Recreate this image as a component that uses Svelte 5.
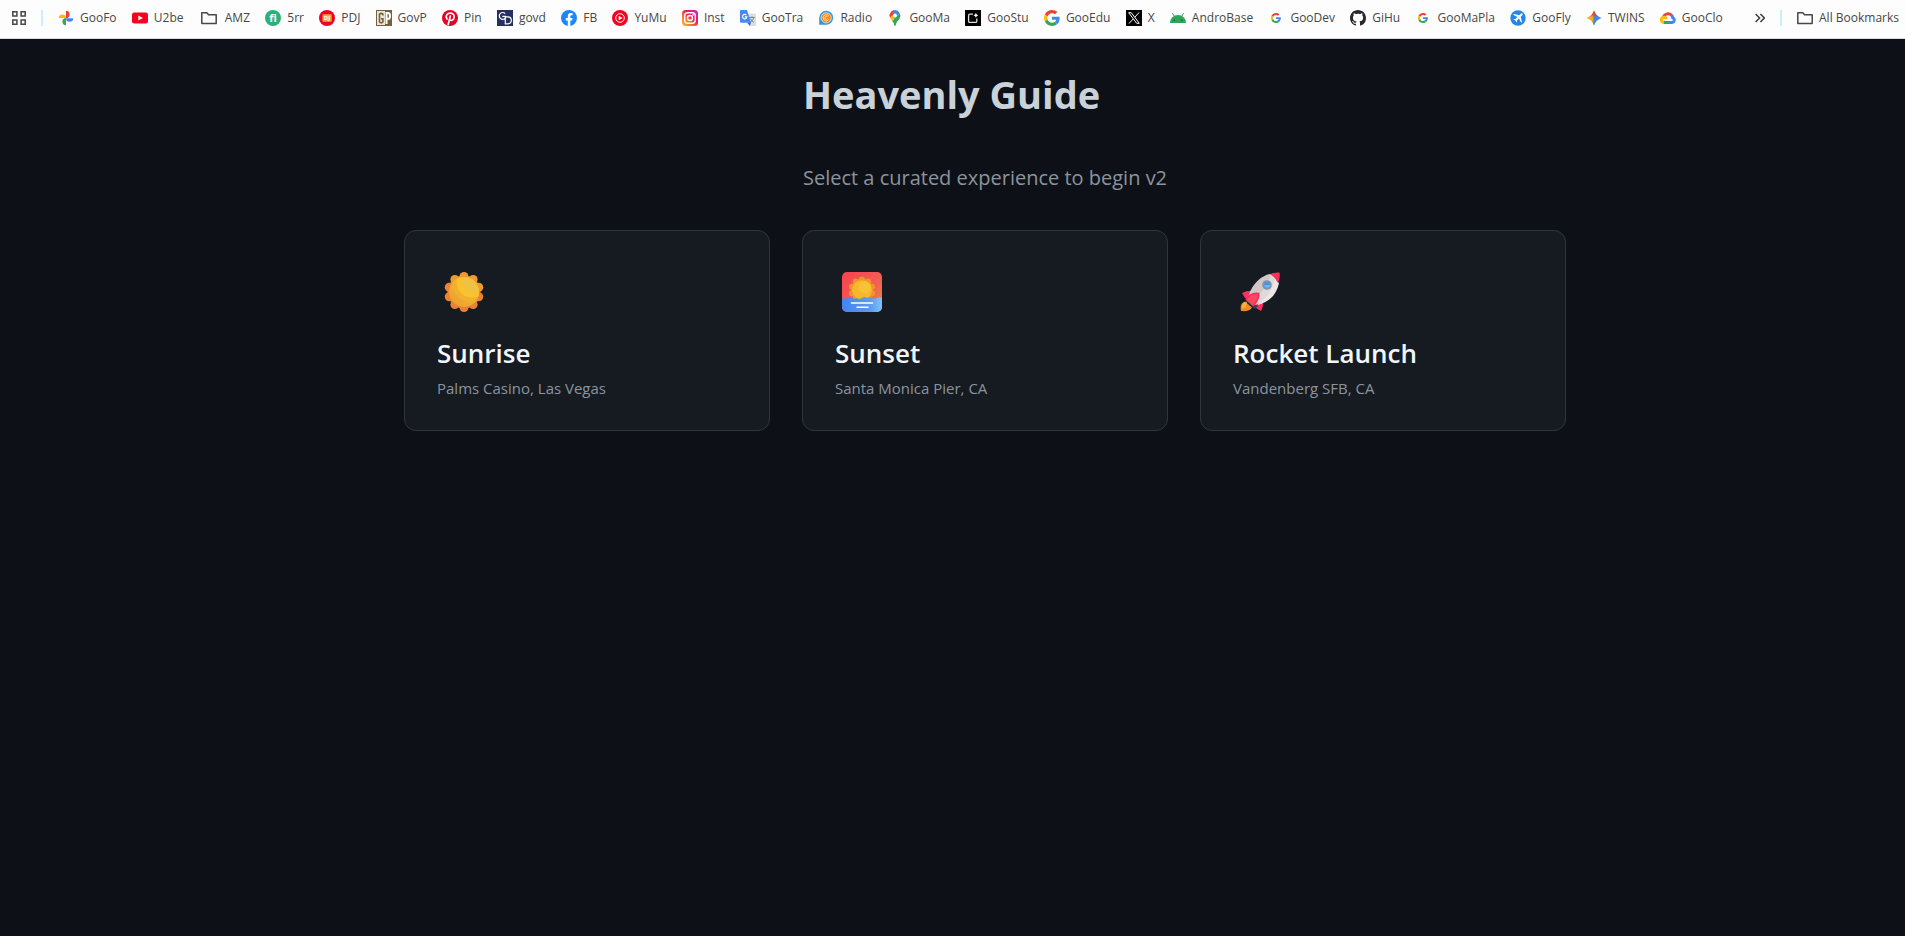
<script>
  const bookmarks = [
    { icon: 'photos', label: 'GooFo' },
    { icon: 'youtube', label: 'U2be' },
    { icon: 'folder', label: 'AMZ' },
    { icon: 'fi', label: '5rr' },
    { icon: 'dj', label: 'PDJ' },
    { icon: 'gp', label: 'GovP' },
    { icon: 'pin', label: 'Pin' },
    { icon: 'gd', label: 'govd' },
    { icon: 'facebook', label: 'FB' },
    { icon: 'ytmusic', label: 'YuMu' },
    { icon: 'instagram', label: 'Inst' },
    { icon: 'translate', label: 'GooTra' },
    { icon: 'radio', label: 'Radio' },
    { icon: 'maps', label: 'GooMa' },
    { icon: 'studio', label: 'GooStu' },
    { icon: 'google', label: 'GooEdu' },
    { icon: 'x', label: 'X' },
    { icon: 'android', label: 'AndroBase' },
    { icon: 'googleSmall', label: 'GooDev' },
    { icon: 'github', label: 'GiHu' },
    { icon: 'googleSmall', label: 'GooMaPla' },
    { icon: 'plane', label: 'GooFly' },
    { icon: 'gemini', label: 'TWINS' },
    { icon: 'cloud', label: 'GooClo' }
  ];

  const experiences = [
    { icon: 'sun', title: 'Sunrise', place: 'Palms Casino, Las Vegas' },
    { icon: 'sunset', title: 'Sunset', place: 'Santa Monica Pier, CA' },
    { icon: 'rocket', title: 'Rocket Launch', place: 'Vandenberg SFB, CA' }
  ];

  const petals = Array.from({ length: 10 }, (_, i) => {
    const a = (i * Math.PI) / 5;
    return { x: 20 + 15.5 * Math.sin(a), y: 20 - 15.5 * Math.cos(a) };
  });
</script>

{#snippet googleMark()}
  <path fill="#ea4335" d="M24 9.5c3.54 0 6.71 1.22 9.21 3.6l6.85-6.85C35.9 2.38 30.47 0 24 0 14.62 0 6.51 5.38 2.56 13.22l7.98 6.19C12.43 13.72 17.74 9.5 24 9.5z" />
  <path fill="#4285f4" d="M46.98 24.55c0-1.57-.15-3.09-.38-4.55H24v9.02h12.94c-.58 2.96-2.26 5.48-4.78 7.18l7.73 6c4.51-4.18 7.09-10.36 7.09-17.65z" />
  <path fill="#fbbc05" d="M10.53 28.59c-.48-1.45-.76-2.99-.76-4.59s.27-3.14.76-4.59l-7.98-6.19C.92 16.46 0 20.12 0 24c0 3.88.92 7.54 2.56 10.78l7.97-6.19z" />
  <path fill="#34a853" d="M24 48c6.48 0 11.93-2.13 15.89-5.81l-7.73-6c-2.15 1.45-4.92 2.3-8.16 2.3-6.26 0-11.57-4.22-13.47-9.91l-7.98 6.19C6.51 42.62 14.62 48 24 48z" />
{/snippet}

{#snippet favicon(name)}
  {#if name === 'google'}
    <svg class="favicon" viewBox="0 0 48 48" aria-hidden="true">{@render googleMark()}</svg>
  {:else if name === 'googleSmall'}
    <svg class="favicon" viewBox="-14 -14 76 76" aria-hidden="true">{@render googleMark()}</svg>
  {:else}
    <svg class="favicon" viewBox="0 0 16 16" aria-hidden="true">
      {#if name === 'photos'}
        <path fill="#ea4335" d="M8 .8a3.6 3.6 0 0 1 3.6 3.6A3.6 3.6 0 0 1 8 8z" />
        <path fill="#4285f4" d="M15.2 8a3.6 3.6 0 0 1-7.2 0z" transform="translate(0 .2)" />
        <path fill="#34a853" d="M8 15.2a3.6 3.6 0 0 1 0-7.2z" />
        <path fill="#fbbc04" d="M.8 8A3.6 3.6 0 0 1 8 8z" />
      {:else if name === 'youtube'}
        <rect x="0" y="2.4" width="16" height="11.2" rx="2.4" fill="#f80020" />
        <path fill="#fff" d="M6.3 5.5 11 8l-4.7 2.5z" />
      {:else if name === 'folder'}
        <path fill="none" stroke="#474747" stroke-width="1.5" stroke-linejoin="round" d="M.8 2.8h5l1.7 2h7.7v8.7H.8z" />
      {:else if name === 'fi'}
        <circle cx="8" cy="8" r="8" fill="#2bb07a" />
        <text x="8" y="12" font-size="11" font-weight="700" text-anchor="middle" fill="#fff">fi</text>
      {:else if name === 'dj'}
        <circle cx="8" cy="8" r="8" fill="#f00028" />
        <rect x="3.500" y="4.300" width="9.200" height="7.400" rx=".6" fill="#f7a823" />
        <text x="8" y="10.200" font-size="6" font-weight="700" text-anchor="middle" fill="#fff">DJ</text>
      {:else if name === 'gp'}
        <rect width="16" height="16" fill="#75623c" />
        <rect x="1" y="1" width="8" height="14" fill="#e9e5da" />
        <path fill="none" stroke="#75623c" stroke-width="1.6" d="M6.9 5.6V4.1Q5.200 2.500 3.500 4.100V12Q5.200 13.600 6.900 12V8.700H5" />
        <path fill="none" stroke="#fff" stroke-width="2" d="M10.500 14V3h1.700q1.800 0 1.800 2.900T12.200 8.800H10.500" />
      {:else if name === 'pin'}
        <circle cx="8" cy="8" r="8" fill="#e60023" />
        <path fill="none" stroke="#fff" stroke-width="1.700" stroke-linecap="round" d="M5 9C2.900 5.600 5.500 3.200 8.300 3.200c2.900 0 4.300 2 3.700 4.500-.5 2.300-2.400 3.400-4.100 2.200M8.300 6 6.200 14.500" />
      {:else if name === 'gd'}
        <rect width="16" height="16" fill="#252f62" />
        <path fill="none" stroke="#fff" stroke-width="1.200" d="M8.200 3.600A3.400 3.400 0 1 0 8.500 7.800V6.300H5.300M8.300 6.800h2.500a3.500 3.500 0 0 1 0 7H8.300z" />
      {:else if name === 'facebook'}
        <circle cx="8" cy="8" r="8" fill="#1d88f5" />
        <path fill="#fff" d="M6.800 16v-5.600h-2V8h2V6.300c0-2.100 1.200-3.200 3-3.200l1.800.2v2h-1c-1 0-1.300.6-1.300 1.200V8h2.200l-.4 2.400H9.300V16z" />
      {:else if name === 'ytmusic'}
        <circle cx="8" cy="8" r="8" fill="#f80020" />
        <circle cx="8" cy="8" r="4.300" fill="none" stroke="#fff" stroke-width="1" />
        <path fill="#fff" d="M6.700 5.700 10.500 8l-3.800 2.300z" />
      {:else if name === 'instagram'}
        <defs>
          <linearGradient id="insta" x1="0" y1="1" x2="1" y2="0">
            <stop offset="0" stop-color="#ffc43a" />
            <stop offset=".35" stop-color="#ff6a28" />
            <stop offset=".6" stop-color="#f0145e" />
            <stop offset="1" stop-color="#c02bd6" />
          </linearGradient>
        </defs>
        <rect width="16" height="16" rx="3.500" fill="url(#insta)" />
        <rect x="2.700" y="2.700" width="10.600" height="10.600" rx="3" fill="none" stroke="#fff" stroke-width="1.400" />
        <circle cx="8" cy="8" r="2.500" fill="none" stroke="#fff" stroke-width="1.400" />
        <circle cx="11.100" cy="4.900" r=".8" fill="#fff" />
      {:else if name === 'translate'}
        <path fill="#dcdfe2" d="M6 3.500h9q1 0 1 1V15q0 1-1 1H10z" />
        <path fill="none" stroke="#71808a" stroke-width=".9" d="M9 7.500h5.800M12 6.200v1.300M13.800 7.700Q12.800 11 10 12.500M10.300 8.500Q11.700 11.500 14 12.500" />
        <path fill="#3a62c8" d="M7 12.500h4L9.800 16z" />
        <path fill="#4688f4" d="M1 0h6l4 12.800H1q-1 0-1-1V1q0-1 1-1z" />
        <path fill="none" stroke="#fff" stroke-width="1.100" d="M6.400 5.200a2.200 2.200 0 1 0 .5 1.700H4.800" />
      {:else if name === 'radio'}
        <path fill="#2e9be0" d="M8.200.8a7 7 0 1 1 0 14H1.200V8a7 7 0 0 1 7-7.200z" />
        <circle cx="8.200" cy="7.800" r="5.100" fill="#f68b1f" stroke="#e8f3fa" stroke-width=".7" />
        <path fill="none" stroke="#ffe3c2" stroke-width=".9" d="M10.800 5.900A3.100 3.100 0 1 0 11 9.300M9.600 7A1.500 1.500 0 1 0 9.600 8.700" />
      {:else if name === 'maps'}
        <path fill="#34a853" d="M13.300 5.600c0 3.400-2.700 4.700-4 7.700C8.900 14.300 8.800 16 8 16s-.9-1.700-1.300-2.700c-.4-1-1-1.800-1.600-2.600z" />
        <path fill="#fbbc04" d="M5.100 10.700C3.900 9.100 2.700 7.700 2.700 5.500L5.500 3.700 10 7z" />
        <path fill="#ea4335" d="M3.900 2A5.300 5.300 0 0 1 7 .2L8 3 3 7.500A5.300 5.300 0 0 1 3.900 2z" />
        <path fill="#4285f4" d="M6.600.2a5.400 5.400 0 0 1 6 2.700L7.500 9 6 5z" />
        <path fill="#34a853" d="M12.600 2.900c1.300 2.800.4 5-1.300 7L5.600 11.300z" />
        <circle cx="8" cy="5.500" r="2" fill="#fff" />
      {:else if name === 'studio'}
        <rect width="16" height="16" fill="#000" />
        <path fill="none" stroke="#ddd" stroke-width="1.300" d="M8 4.200H4.800q-1.200 0-1.200 1.200v5.800q0 1.200 1.200 1.200h5.800q1.200 0 1.200-1.200V8.500" />
        <path fill="#fff" d="M10.900 2.700q.4 2 2.400 2.500-2 .5-2.400 2.500-.4-2-2.400-2.500 2-.5 2.400-2.500z" />
      {:else if name === 'x'}
        <rect width="16" height="16" fill="#000" />
        <path fill="none" stroke="#fff" stroke-width="1" d="M2.700 2.700h2.600l8 10.600h-2.600zM13 2.500 8.800 7.200M7.200 9 3 13.500" />
      {:else if name === 'android'}
        <path fill="none" stroke="#2da65a" stroke-width="1" stroke-linecap="round" d="m2.600 3.500 2 3.200M13.400 3.500l-2 3.200" />
        <path fill="#2da65a" d="M0 13a8 8 0 0 1 16 0z" />
        <circle cx="4.300" cy="10.200" r=".8" fill="#135c2c" />
        <circle cx="11.700" cy="10.200" r=".8" fill="#135c2c" />
      {:else if name === 'github'}
        <path fill="#24292f" d="M8 0C3.580 0 0 3.580 0 8c0 3.540 2.290 6.530 5.470 7.590.4.070.55-.17.550-.38 0-.19-.01-.82-.01-1.490-2.010.37-2.530-.49-2.690-.94-.09-.23-.48-.94-.82-1.130-.28-.15-.68-.52-.01-.53.63-.01 1.080.58 1.230.82.72 1.210 1.870.87 2.330.66.07-.52.28-.87.51-1.070-1.780-.2-3.640-.89-3.640-3.950 0-.87.31-1.590.82-2.150-.08-.2-.36-1.020.08-2.120 0 0 .67-.21 2.200.82.64-.18 1.320-.27 2-.27s1.360.09 2 .27c1.530-1.040 2.200-.82 2.200-.82.44 1.100.16 1.920.08 2.120.51.56.82 1.270.82 2.150 0 3.070-1.870 3.750-3.650 3.950.29.25.54.73.54 1.480 0 1.070-.01 1.930-.01 2.200 0 .21.15.46.55.38A8.010 8.010 0 0 0 16 8c0-4.420-3.580-8-8-8z" />
      {:else if name === 'plane'}
        <circle cx="8" cy="8" r="7.700" fill="#2386e8" />
        <path fill="#fff" d="M12.400 3.600c-.5-.5-1.300-.2-1.800.3L9.200 5.300 4 4l-.8.800 4.200 2.300-1.900 2-1.500-.2-.6.600 2 1.100 1.100 2 .6-.6-.2-1.500 2-1.900 2.300 4.200.8-.8-1.300-5.200 1.400-1.400c.5-.5.800-1.300.3-1.800z" />
      {:else if name === 'gemini'}
        <defs>
          <linearGradient id="gem" x1="0" y1=".5" x2="1" y2=".5">
            <stop offset="0" stop-color="#fbbc04" />
            <stop offset=".42" stop-color="#f3a52f" />
            <stop offset=".5" stop-color="#4285f4" />
            <stop offset="1" stop-color="#3d86f8" />
          </linearGradient>
          <linearGradient id="gemRed" x1="0" y1="0" x2="0" y2="1">
            <stop offset="0" stop-color="#ea4335" />
            <stop offset=".25" stop-color="#ea4335" />
            <stop offset=".45" stop-color="#ea4335" stop-opacity="0" />
            <stop offset=".65" stop-color="#34a853" stop-opacity="0" />
            <stop offset="1" stop-color="#34a853" />
          </linearGradient>
        </defs>
        <path fill="url(#gem)" d="M8 .5Q9.800 6.200 15.500 8 9.800 9.800 8 15.500 6.200 9.800.5 8 6.200 6.200 8 .5z" />
        <path fill="url(#gemRed)" d="M8 .5Q9.800 6.200 15.500 8 9.800 9.800 8 15.500 6.200 9.800.5 8 6.200 6.200 8 .5z" />
      {:else if name === 'cloud'}
        <g fill="none" stroke-width="3">
          <path stroke="#ea4335" d="M3.300 7A5 5 0 0 1 11.500 5.200" />
          <path stroke="#4285f4" d="M11 4.700Q12.600 6 12.700 7.700a2.500 2.500 0 0 1-.7 4.800H8" />
          <path stroke="#34a853" d="M8.300 12.500H4.500L3.300 12" />
          <path stroke="#fbbc04" d="M4 12.400A2.600 2.600 0 1 1 6.500 9" />
        </g>
      {/if}
    </svg>
  {/if}
{/snippet}

{#snippet emblem(name)}
  <svg class="emblem" viewBox="0 0 40 40" aria-hidden="true">
    {#if name === 'sun'}
      <defs>
        <linearGradient id="disc" x1="1" y1="0" x2="0" y2="1">
          <stop offset="0" stop-color="#f6c93a" />
          <stop offset="1" stop-color="#e99a2b" />
        </linearGradient>
        <clipPath id="discClip"><circle cx="20" cy="20" r="15" /></clipPath>
      </defs>
      <circle cx="20" cy="20" r="16.500" fill="#ee8434" />
      {#each petals as p, i}
        <circle cx={p.x} cy={p.y} r="4.500" fill={i < 3 || i > 8 ? '#f09a2e' : '#ec8035'} />
      {/each}
      <circle cx="20" cy="20" r="15" fill="url(#disc)" />
      <g clip-path="url(#discClip)">
        <circle cx="29" cy="10" r="21" fill="#f1b02d" />
        <circle cx="28" cy="10" r="15.500" fill="#fbc22f" />
        <circle cx="29" cy="10" r="10.500" fill="#f0c241" />
      </g>
    {:else if name === 'sunset'}
      <defs>
        <linearGradient id="sky" x1="0" y1="0" x2="1" y2="1">
          <stop offset="0" stop-color="#f8414f" />
          <stop offset=".5" stop-color="#f45a55" />
          <stop offset="1" stop-color="#e98a40" />
        </linearGradient>
        <linearGradient id="sea" x1="0" y1="0" x2="1" y2="0">
          <stop offset="0" stop-color="#4285f4" />
          <stop offset=".7" stop-color="#5b9bea" />
          <stop offset="1" stop-color="#80c0ff" />
        </linearGradient>
        <clipPath id="tile"><rect width="40" height="40" rx="5" /></clipPath>
      </defs>
      <g clip-path="url(#tile)">
        <rect width="40" height="40" fill="url(#sky)" />
        <g transform="translate(6.400 4.400) scale(.68)">
          <circle cx="20" cy="20" r="16.500" fill="#ee962b" />
          {#each petals as p}
            <circle cx={p.x} cy={p.y} r="4.500" fill="#ee962b" />
          {/each}
          <circle cx="20" cy="20" r="14.500" fill="#f6b72d" />
          <circle cx="24" cy="16" r="9" fill="#f8c235" />
        </g>
        <path fill="url(#sea)" d="M0 26q2.500 1.500 5 0t5 0 5 0q2.500 2 5 0t5 0q2.500-1.500 5 0t5 0 5 0v14H0z" />
        <path stroke="#fff" stroke-width="1.500" stroke-linecap="round" d="M9.500 31h21M15 35.200h11" />
      </g>
    {:else}
      <path fill="#f08c25" d="M1 39C0 34 1 31 5 29.500l7 6C10 39 6 39.500 1 39z" />
      <path fill="#f9ae36" d="M2 33q2-4 5-3l-1 5-4 2z" />
      <path fill="#fb3060" d="M2 21q6-3 12-2l-5 9-4-2zM21 39q3-6 2-12l-9 5 2 4z" />
      <path fill="#36405d" d="m6 29 3-3 9 8-3 3z" />
      <path fill="#ded9dc" d="M8 27C10 15 21 2 37 1c1 14-6 27-22 32z" />
      <path fill="#d3c6c7" d="M8 27C10 15 20 3 31 2 28 13 20 23 12 30z" />
      <path fill="#eee5e7" d="M39 11C37 22 29 31 17 33 25 28 33 18 35 7z" />
      <path fill="#fa3158" d="M30 2.200Q35 0 39.500.5 40.500 6 38 11 35 5 30 2.200z" />
      <path fill="#f34c5c" d="M6 28q5-8 12.500-6.500Q20 26 13 34z" />
      <path fill="none" stroke="#fc2964" stroke-width="1.700" d="M6 28q5-8 12.500-6.500Q20 26 13 34" />
      <circle cx="27" cy="13" r="4" fill="#4c93e8" stroke="#8297a4" stroke-width="1.700" />
      <path fill="#6db4fa" d="M24 13h6.500a3.300 3.300 0 0 1-6.500 0z" />
    {/if}
  </svg>
{/snippet}

<div class="page">
  <nav class="bar" aria-label="Bookmarks">
    <button class="apps" aria-label="Apps">
      <svg viewBox="0 0 14 14" width="14" height="14" aria-hidden="true">
        <path fill="none" stroke="#474747" stroke-width="1.500" d="M.8.8h4.100v4.100H.8zM9.100.8h4.100v4.100H9.100zM.8 9.100h4.100v4.100H.8zM9.100 9.100h4.100v4.100H9.100z" />
      </svg>
    </button>
    <span class="divider"></span>
    <div class="list">
      {#each bookmarks as b}
        <a class="bookmark" class:wide={b.icon === 'folder'} href="#{b.label}">
          {@render favicon(b.icon)}
          <span>{b.label}</span>
        </a>
      {/each}
    </div>
    <button class="more" aria-label="More bookmarks">
      <svg viewBox="0 0 10 10" width="10" height="10" aria-hidden="true">
        <path fill="none" stroke="#3c3c3c" stroke-width="1.500" d="m.6 1 4 4-4 4M5.400 1l4 4-4 4" />
      </svg>
    </button>
    <span class="divider"></span>
    <a class="bookmark all" href="#all">
      {@render favicon('folder')}
      <span>All Bookmarks</span>
    </a>
  </nav>

  <main>
    <header>
      <h1>Heavenly Guide</h1>
      <p>Select a curated experience to begin v2</p>
    </header>
    <div class="cards">
      {#each experiences as e}
        <button class="card">
          <span class="picture">{@render emblem(e.icon)}</span>
          <span class="title">{e.title}</span>
          <span class="place">{e.place}</span>
        </button>
      {/each}
    </div>
  </main>
</div>

<style>
  :global(body) {
    margin: 0;
    background: #0d1117;
  }
  .page {
    min-height: 100vh;
    box-sizing: border-box;
    font-family: "Segoe UI", "Open Sans", "Noto Sans", sans-serif;
    color: #c9d1d9;
  }
  button {
    font: inherit;
    color: inherit;
    cursor: pointer;
  }
  .bar {
    display: flex;
    align-items: center;
    height: 39px;
    padding: 0 6px 2px 12px;
    box-sizing: border-box;
    background: #fdfdfd;
    border-bottom: 1px solid #d5dde2;
    font-size: 12px;
    line-height: 16px;
    color: #474747;
  }
  .apps,
  .more {
    display: flex;
    padding: 0;
    border: 0;
    background: none;
  }
  .divider {
    flex: none;
    width: 2px;
    height: 16px;
    margin: 0 15px;
    background: #cdeffc;
  }
  .list {
    display: flex;
    flex: 1;
    justify-content: space-between;
    min-width: 0;
    margin-right: 32px;
    overflow: hidden;
  }
  .bookmark {
    display: flex;
    flex: none;
    align-items: center;
    gap: 6px;
    color: inherit;
    text-decoration: none;
    white-space: nowrap;
  }
  .wide {
    gap: 8px;
    padding-left: 2px;
  }
  .favicon {
    display: block;
    width: 16px;
    height: 16px;
  }
  main {
    display: flex;
    flex-direction: column;
    align-items: center;
    gap: 38px;
    padding: 32px 32px 32px 97px;
  }
  h1 {
    margin: 0 0 47px;
    font-size: 38px;
    line-height: 46px;
    font-weight: 700;
  }
  p {
    margin: 0;
    font-size: 20px;
    line-height: 28px;
    color: #8b949e;
  }
  .cards {
    display: grid;
    grid-template-columns: repeat(3, 1fr);
    gap: 32px;
    width: 100%;
    max-width: 1162px;
  }
  .card {
    display: flex;
    flex-direction: column;
    align-items: flex-start;
    padding: 32px;
    border: 1px solid #30363d;
    border-radius: 12px;
    background: #161b22;
    text-align: left;
  }
  .picture {
    padding: 9px 7px;
    margin-bottom: 14px;
  }
  .emblem {
    display: block;
    width: 40px;
    height: 40px;
  }
  .title {
    margin-bottom: 7px;
    font-size: 26px;
    line-height: 36px;
    font-weight: 600;
    color: #f0f6fc;
  }
  .place {
    font-size: 15px;
    line-height: 20px;
    color: #8b949e;
  }
</style>
